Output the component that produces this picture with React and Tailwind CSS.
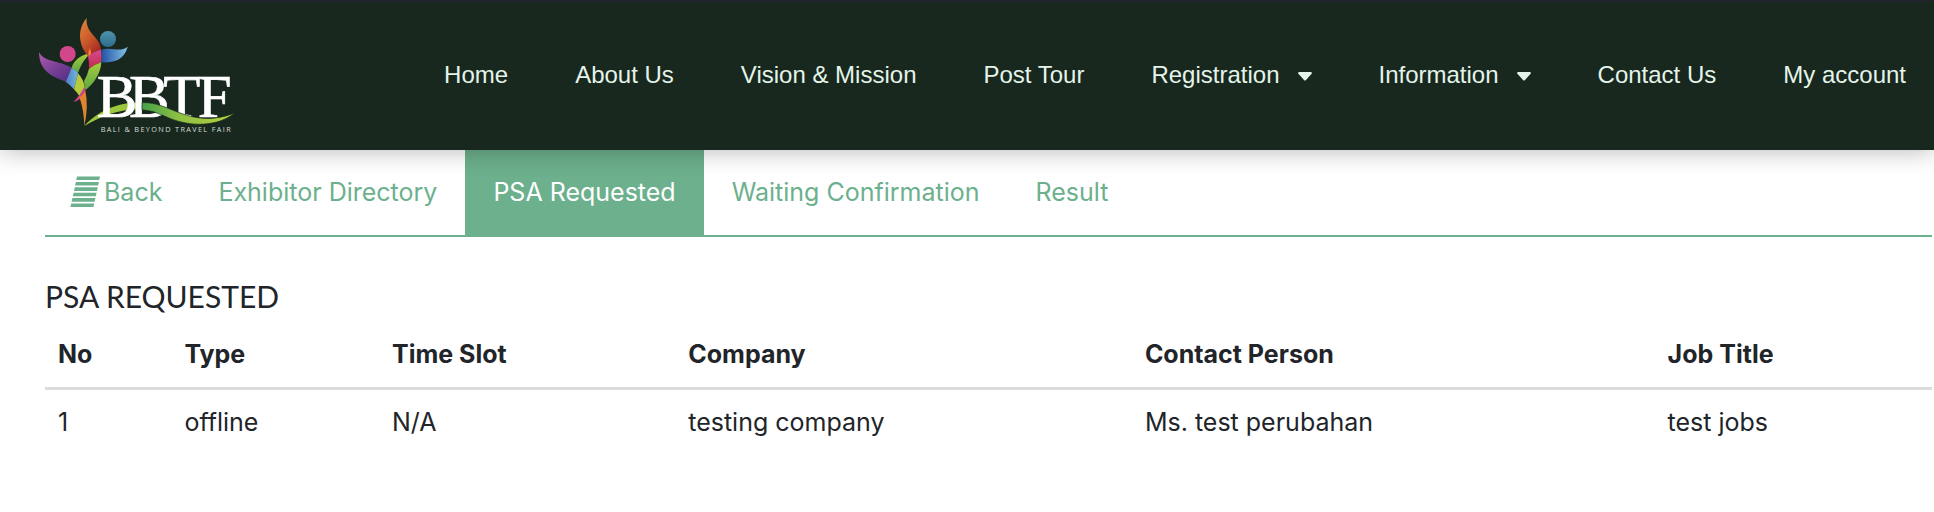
import React, { useState } from 'react';

const navItems = [
  { label: 'Home' },
  { label: 'About Us' },
  { label: 'Vision & Mission' },
  { label: 'Post Tour' },
  { label: 'Registration', dropdown: true },
  { label: 'Information', dropdown: true },
  { label: 'Contact Us' },
  { label: 'My account' },
];

const tabs = ['Exhibitor Directory', 'PSA Requested', 'Waiting Confirmation', 'Result'];

const columns = [
  { key: 'no', label: 'No', width: 'w-[6.7%]' },
  { key: 'type', label: 'Type', width: 'w-[11%]' },
  { key: 'slot', label: 'Time Slot', width: 'w-[15.7%]' },
  { key: 'company', label: 'Company', width: 'w-[24.2%]' },
  { key: 'contact', label: 'Contact Person', width: 'w-[27.7%]' },
  { key: 'job', label: 'Job Title', width: 'w-[14.7%]' },
];

const requests = [
  { no: 1, type: 'offline', slot: 'N/A', company: 'testing company', contact: 'Ms. test perubahan', job: 'test jobs' },
];

function Logo() {
  return (
    <svg viewBox="51 51 600 354" className="h-[118px] w-[200px]" role="img" aria-label="BBTF">
      <defs>
        <linearGradient id="purple" x1="0" y1="0" x2="1" y2="1">
          <stop offset="0" stopColor="#b05cb0" />
          <stop offset="0.5" stopColor="#7a4196" />
          <stop offset="1" stopColor="#4f2d84" />
        </linearGradient>
        <linearGradient id="orange" x1="0" y1="0" x2="0.6" y2="1">
          <stop offset="0" stopColor="#e58a3c" />
          <stop offset="0.6" stopColor="#c9572a" />
          <stop offset="1" stopColor="#a92a22" />
        </linearGradient>
        <linearGradient id="blue" x1="0" y1="0" x2="1" y2="0">
          <stop offset="0" stopColor="#2450a4" />
          <stop offset="1" stopColor="#7fc4e6" />
        </linearGradient>
        <linearGradient id="sky" x1="0" y1="0" x2="1" y2="0">
          <stop offset="0" stopColor="#4a80c4" />
          <stop offset="1" stopColor="#78b4de" />
        </linearGradient>
        <linearGradient id="green" x1="0" y1="1" x2="0" y2="0">
          <stop offset="0" stopColor="#5ba545" />
          <stop offset="1" stopColor="#a8cc3c" />
        </linearGradient>
        <linearGradient id="ribbon" x1="0" y1="0" x2="1" y2="0">
          <stop offset="0" stopColor="#46a04a" />
          <stop offset="0.4" stopColor="#8fc043" />
          <stop offset="1" stopColor="#b6d23e" />
        </linearGradient>
        <linearGradient id="pink" x1="0" y1="0" x2="0" y2="1">
          <stop offset="0" stopColor="#d84a92" />
          <stop offset="1" stopColor="#c22a48" />
        </linearGradient>
        <linearGradient id="teal" x1="0" y1="0" x2="0" y2="1">
          <stop offset="0" stopColor="#4e94ac" />
          <stop offset="1" stopColor="#2f6a8c" />
        </linearGradient>
      </defs>

      {/* figures */}
      <path d="M155 206C160 186 178 172 205 163L207 168C194 180 182 198 174 223Z" fill="url(#green)" />
      <path d="M57 160C74 190 112 183 155 206L137 248C92 232 58 214 57 160Z" fill="url(#purple)" />
      <path d="M155 206Q166 212 174 223L162 271Q150 257 137 248Z" fill="url(#sky)" />
      <path d="M174 223Q190 240 195 266L178 292Q171 280 162 271Z" fill="#b4cc3c" />
      <path d="M200 57C196 106 241 112 243 152Q222 156 205 172C176 140 170 92 200 57Z" fill="url(#orange)" />
      <path d="M209 147Q214 158 213 168L205 173Q203 160 209 147Z" fill="#ee8a38" />
      <path d="M243 152Q247 170 244 190Q224 196 207 209Q208 190 204 172Q222 156 243 152Z" fill="url(#pink)" />
      <path d="M244 152C278 142 296 162 323 143C314 178 288 192 244 190Q247 170 244 152Z" fill="url(#blue)" />
      <path d="M244 190C242 224 222 254 196 274Q193 256 192 246Q202 230 207 209Q224 196 244 190Z" fill="url(#green)" />
      <path d="M193 264Q200 276 190 288Q180 304 160 309Q178 292 193 264Z" fill="#d0418a" />
      <path d="M178 294Q190 290 196 274Q206 324 193 381Q192 334 178 294Z" fill="#e08430" />
      <circle cx="143" cy="165" r="24" fill="#d2478c" />
      <circle cx="264" cy="120" r="24" fill="url(#teal)" />

      {/* ribbon passes behind the first letters and over the last ones */}
      <path d="M193 381C230 340 290 308 368 311L368 332C300 328 246 350 193 381Z" fill="#9cc63e" />
      <text x="230 327 430 533" y="355" fontSize="182" fill="#fff" stroke="#fff" strokeWidth="2" className="font-['Liberation_Serif',serif]">BBTF</text>
      <path d="M366 311C450 306 510 394 645 342C580 392 490 378 438 353Q400 334 366 332Z" fill="url(#ribbon)" stroke="#18281e" strokeWidth="2" />

      <text x="242" y="399" fontSize="22" fill="#d4dbd6" className="font-['Open_Sans',sans-serif] tracking-[4px]">BALI &amp; BEYOND TRAVEL FAIR</text>
    </svg>
  );
}

function Caret() {
  return (
    <svg viewBox="0 0 14 9" className="mt-0.5 h-[9px] w-3.5" fill="currentColor" aria-hidden="true">
      <path d="M1 0H13Q14.5 0.6 13.6 1.8L8 8Q7 9 6 8L0.4 1.8Q-0.5 0.6 1 0Z" />
    </svg>
  );
}

function BackIcon() {
  return (
    <svg viewBox="0 0 30 34" className="h-[34px] w-[30px]" fill="currentColor" aria-hidden="true">
      <path d="M7 .5h23l-.8 3.6h-23zM5.9 5.9h23l-.8 3.6h-23zM4.8 11.3h23l-.8 3.6h-23zM3.6 16.7h23l-.8 3.6h-23zM2.4 22.1h23l-.8 3.6h-23zM1.2 27.5h23l-.8 3.6h-23z" />
    </svg>
  );
}

export default function App() {
  const [activeTab, setActiveTab] = useState('PSA Requested');

  return (
    <div className="bg-white font-['Inter',sans-serif] text-[#212529]">
      <header className="relative z-10 flex h-[150px] items-center justify-between border-t-2 border-[#20242b] bg-[#18281e] pr-7 pb-0.5 pl-[37px] shadow-[0_0_24px_rgba(0,0,0,0.3)]">
        <a href="#home"><Logo /></a>
        <nav className="flex items-center gap-[67px] font-['Liberation_Sans',sans-serif] text-2xl text-[#e4f4ea]">
          {navItems.map(item => (
            item.dropdown ? (
              <button key={item.label} type="button" className="flex items-center gap-[18px] whitespace-nowrap">
                {item.label}
                <Caret />
              </button>
            ) : (
              <a key={item.label} href="#nav" className="whitespace-nowrap">{item.label}</a>
            )
          ))}
        </nav>
      </header>

      <main className="pr-0.5 pl-[45px]">
        <div className="flex h-[87px] border-b-2 border-[#6cb08d] text-[25px] text-[#6cb08d]">
          <a href="#back" className="flex items-center gap-1 pr-7 pl-[25px]">
            <BackIcon />
            Back
          </a>
          {tabs.map(tab => (
            <button
              key={tab}
              type="button"
              className={`px-7 whitespace-nowrap ${activeTab === tab ? 'bg-[#6cb08d] text-white' : ''}`}
              onClick={() => setActiveTab(tab)}
            >{tab}</button>
          ))}
        </div>

        <h1 className="mt-[39px] text-[30px] leading-10 font-['Lato',sans-serif]">PSA REQUESTED</h1>

        <table className="w-full table-fixed text-left text-[25px] leading-9">
          <thead>
            <tr className="border-b-3 border-[#dcdcdc]">
              {columns.map(col => (
                <th key={col.key} className={`px-[13px] pt-5 pb-[15px] font-bold ${col.width}`}>{col.label}</th>
              ))}
            </tr>
          </thead>
          <tbody>
            {requests.map(req => (
              <tr key={req.no}>
                {columns.map(col => (
                  <td key={col.key} className="px-[13px] py-3.5">{req[col.key]}</td>
                ))}
              </tr>
            ))}
          </tbody>
        </table>
      </main>
    </div>
  );
}
